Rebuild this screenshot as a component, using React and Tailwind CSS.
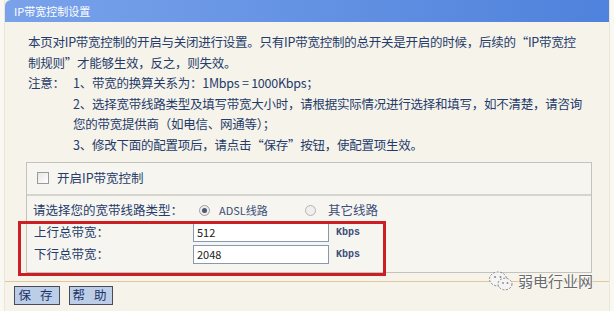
export default function App() {
  const font = { fontFamily: '"SimSun", "Noto Sans CJK SC", "Liberation Sans", sans-serif' }

  return (
    <div className="relative w-[614px] h-[311px] overflow-hidden bg-[#faf8f2]" style={font}>
      <div className="mx-[4px] h-full bg-[#f6f3ea] border-x border-[#ece6d8]">
        {/* header */}
        <div className="h-[22px] rounded-tl-[6px] bg-gradient-to-r from-[#79a2ea] to-[#4f82dc] flex items-center pl-[9px] text-[11px] text-white">
          IP带宽控制设置
        </div>

        {/* description */}
        <div className="pl-[23px] pt-[10px] text-[12.5px] leading-[20.6px] text-[#253c6a] tracking-[-0.25px]">
          <p>本页对IP带宽控制的开启与关闭进行设置。只有IP带宽控制的总开关是开启的时候，后续的“IP带宽控</p>
          <p>制规则”才能够生效，反之，则失效。</p>
          <div className="flex">
            <span className="w-[45px] shrink-0">注意：</span>
            <div>
              <p>1、带宽的换算关系为：1Mbps = 1000Kbps；</p>
              <p>2、选择宽带线路类型及填写带宽大小时，请根据实际情况进行选择和填写，如不清楚，请咨询</p>
              <p>您的带宽提供商（如电信、网通等）；</p>
              <p>3、修改下面的配置项后，请点击“保存”按钮，使配置项生效。</p>
            </div>
          </div>
        </div>

        {/* settings box */}
        <div className="ml-[21px] mt-[6px] w-[566px] h-[111px] border border-[#c4c2bc] bg-[#f7f5f0] text-[12.5px] text-[#253c6a]">
          <div className="h-[33px] flex items-center pl-[10px] border-b-2 border-[#d6d4ce]">
            <span className="w-[12px] h-[12px] border border-[#9a9a9a] bg-gradient-to-br from-[#e6e6e6] to-[#ffffff]" />
            <span className="ml-[8px]">开启IP带宽控制</span>
          </div>
          <div className="h-[26px] flex items-center pl-[6px] pt-[4px]">
            <span className="w-[166px]">请选择您的宽带线路类型：</span>
            <span className="w-[11px] h-[11px] rounded-full border border-[#a0a0a0] bg-[#ededed] flex items-center justify-center">
              <span className="w-[5px] h-[5px] rounded-full bg-[#4a5a70]" />
            </span>
            <span className="ml-[9px] w-[86px] text-[11px] text-[#3a4d78]">ADSL线路</span>
            <span className="w-[11px] h-[11px] rounded-full border border-[#b4b4b4] bg-[#efefef]" />
            <span className="ml-[12px] text-[#3a4d78]">其它线路</span>
          </div>
          <div className="h-[22px] flex items-center pl-[7px]">
            <span className="w-[159px]">上行总带宽：</span>
            <div className="w-[136px] h-[19px] border border-[#8898b0] bg-white text-[11px] text-[#222] pl-[3px] flex items-center">512</div>
            <span className="ml-[7px] text-[10px] font-bold text-[#3a4d78]" style={{ fontFamily: '"Liberation Mono", monospace' }}>Kbps</span>
          </div>
          <div className="h-[22px] flex items-center pl-[7px]">
            <span className="w-[159px]">下行总带宽：</span>
            <div className="w-[136px] h-[19px] border border-[#8898b0] bg-white text-[11px] text-[#222] pl-[3px] flex items-center">2048</div>
            <span className="ml-[7px] text-[10px] font-bold text-[#3a4d78]" style={{ fontFamily: '"Liberation Mono", monospace' }}>Kbps</span>
          </div>
        </div>

        {/* footer */}
        <div className="mt-[8px] border-t border-[#e2c79c] flex gap-[9px] pl-[9px] pt-[4px]">
          <button className="w-[46px] h-[19px] border border-[#4a4a5a] bg-[#bccde8] text-[12.5px] text-[#1e3266] tracking-[3px] leading-none">保 存</button>
          <button className="w-[44px] h-[19px] border border-[#4a4a5a] bg-[#bccde8] text-[12.5px] text-[#1e3266] tracking-[3px] leading-none">帮 助</button>
        </div>
      </div>

      {/* red annotation */}
      <div className="absolute left-[18px] top-[221px] w-[368px] h-[55px] border-[3px] border-[#cc1f24]" />

      {/* watermark */}
      <div className="absolute left-[488px] top-[270px] flex items-center gap-[4px]">
        <svg width="26" height="22" viewBox="0 0 26 22">
          <ellipse cx="10" cy="9" rx="8.5" ry="7" fill="#f4f4f4" stroke="#888" strokeWidth="1" strokeDasharray="2 1.5" />
          <ellipse cx="17" cy="14" rx="7" ry="5.8" fill="#f4f4f4" stroke="#888" strokeWidth="1" strokeDasharray="2 1.5" />
          <circle cx="7" cy="7" r="1" fill="#888" />
          <circle cx="12.5" cy="7" r="1" fill="#888" />
          <circle cx="15" cy="13" r="0.9" fill="#888" />
          <circle cx="19.5" cy="13" r="0.9" fill="#888" />
        </svg>
        <span
          className="text-[15px] text-[#6a6a6a]"
          style={{ fontFamily: '"Noto Sans CJK SC", sans-serif', textShadow: '0 0 2px #fff, 0 0 2px #fff, 0 0 2px #fff' }}
        >
          弱电行业网
        </span>
      </div>
    </div>
  )
}
